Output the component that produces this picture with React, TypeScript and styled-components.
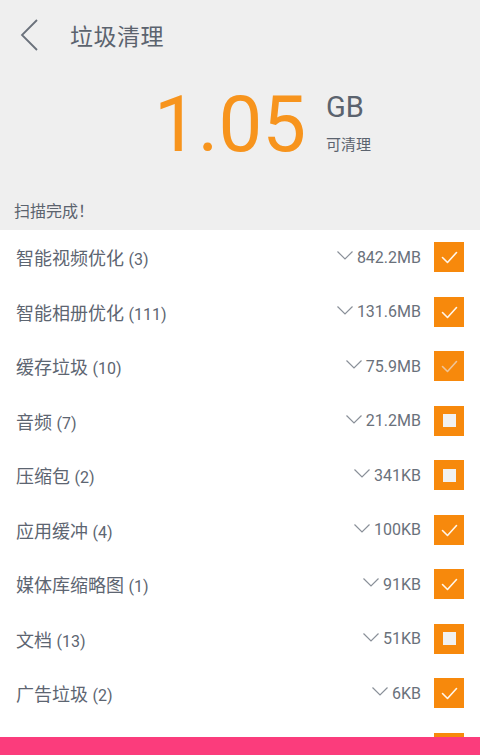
import React from 'react'
import styled, { createGlobalStyle } from 'styled-components'

const GlobalStyle = createGlobalStyle`
	html, body {
		margin: 0;
		padding: 0;
		background: #efefef;
	}
	body {
		font-family: Roboto, "Noto Sans CJK SC", sans-serif;
	}
`

type Item = {
	name: string
	count: number
	size: string
	state: 'checked' | 'partial' | 'none'
}

const items: Item[] = [
	{ name: '智能视频优化', count: 3, size: '842.2MB', state: 'checked' },
	{ name: '智能相册优化', count: 111, size: '131.6MB', state: 'checked' },
	{ name: '缓存垃圾', count: 10, size: '75.9MB', state: 'partial' },
	{ name: '音频', count: 7, size: '21.2MB', state: 'none' },
	{ name: '压缩包', count: 2, size: '341KB', state: 'none' },
	{ name: '应用缓冲', count: 4, size: '100KB', state: 'checked' },
	{ name: '媒体库缩略图', count: 1, size: '91KB', state: 'checked' },
	{ name: '文档', count: 13, size: '51KB', state: 'none' },
	{ name: '广告垃圾', count: 2, size: '6KB', state: 'checked' },
]

const Checkbox: React.FC<{ state: Item['state'] }> = ({ state }) => (
	<Box>
		{state === 'none' ? (
			<Hole />
		) : (
			<svg width="30" height="30" viewBox="0 0 30 30">
				<polyline
					points="8.5,15.5 13.5,20.5 22.5,10.5"
					fill="none"
					stroke={state === 'checked' ? '#fff6ea' : '#eec59a'}
					strokeWidth="1.6"
					strokeLinecap="round"
					strokeLinejoin="round"
				/>
			</svg>
		)}
	</Box>
)

export default function App() {
	return (
		<Page>
			<GlobalStyle />
			<TopBar>
				<svg width="22" height="34" viewBox="0 0 22 34">
					<polyline
						points="18,2 3,17 18,32"
						fill="none"
						stroke="#6a717b"
						strokeWidth="1.8"
					/>
				</svg>
				<Title>垃圾清理</Title>
			</TopBar>
			<Summary>
				<BigNumber>1.05</BigNumber>
				<Unit>
					<UnitLabel>GB</UnitLabel>
					<UnitSub>可清理</UnitSub>
				</Unit>
			</Summary>
			<Status>扫描完成！</Status>
			<List>
				{items.map((item) => (
					<Row key={item.name}>
						<Name>
							{item.name} <Count>({item.count})</Count>
						</Name>
						<Size>
							<svg width="16" height="9" viewBox="0 0 16 9">
								<polyline
									points="0.5,0.5 8,8 15.5,0.5"
									fill="none"
									stroke="#8a9099"
									strokeWidth="1.2"
								/>
							</svg>
							{item.size}
						</Size>
						<Checkbox state={item.state} />
					</Row>
				))}
				{/* next row, only its checkbox peeks out above the bottom bar */}
				<Row>
					<Name />
					<Checkbox state="checked" />
				</Row>
			</List>
			<Footer />
		</Page>
	)
}

const Page = styled.div`
	width: 480px;
	height: 755px;
	display: flex;
	flex-direction: column;
	overflow: hidden;
	background: #efefef;
`

const TopBar = styled.div`
	height: 70px;
	display: flex;
	align-items: center;
	padding-left: 19px;
	gap: 29px;
	flex-shrink: 0;
`

const Title = styled.div`
	font-size: 23px;
	color: #5b636e;
	letter-spacing: 0.5px;
`

const Summary = styled.div`
	display: flex;
	align-items: flex-start;
	gap: 20px;
	height: 112px;
	padding-left: 154px;
	flex-shrink: 0;
`

const BigNumber = styled.div`
	font-family: Roboto, sans-serif;
	font-weight: 400;
	font-size: 78px;
	line-height: 1;
	color: #f7941d;
	margin-top: 16px;
`

const Unit = styled.div`
	display: flex;
	flex-direction: column;
	margin-top: 23px;
`

const UnitLabel = styled.div`
	font-size: 29px;
	line-height: 1;
	color: #5b636e;
`

const UnitSub = styled.div`
	font-size: 15px;
	color: #5b636e;
	margin-top: 11px;
`

const Status = styled.div`
	height: 48px;
	line-height: 56px;
	padding-left: 14px;
	font-size: 16px;
	font-family: "Noto Sans CJK SC", sans-serif;
	color: #5b636e;
	flex-shrink: 0;
`

const List = styled.div`
	flex: 1;
	background: #ffffff;
	overflow: hidden;
`

const Row = styled.div`
	height: 54.5px;
	display: flex;
	align-items: center;
	padding: 0 16px;
`

const Name = styled.div`
	flex: 1;
	font-size: 18px;
	color: #5d6571;
`

const Count = styled.span`
	font-size: 16px;
`

const Size = styled.div`
	display: flex;
	align-items: center;
	gap: 4px;
	font-size: 16px;
	color: #6a717b;
	margin-right: 13px;
	svg {
		margin-top: -3px;
	}
`

const Box = styled.div`
	width: 30px;
	height: 30px;
	background: #f7890c;
	display: flex;
	align-items: center;
	justify-content: center;
`

const Hole = styled.div`
	width: 13px;
	height: 13px;
	background: #f1f1f1;
`

const Footer = styled.div`
	height: 18px;
	background: #fb3c7c;
	flex-shrink: 0;
`
